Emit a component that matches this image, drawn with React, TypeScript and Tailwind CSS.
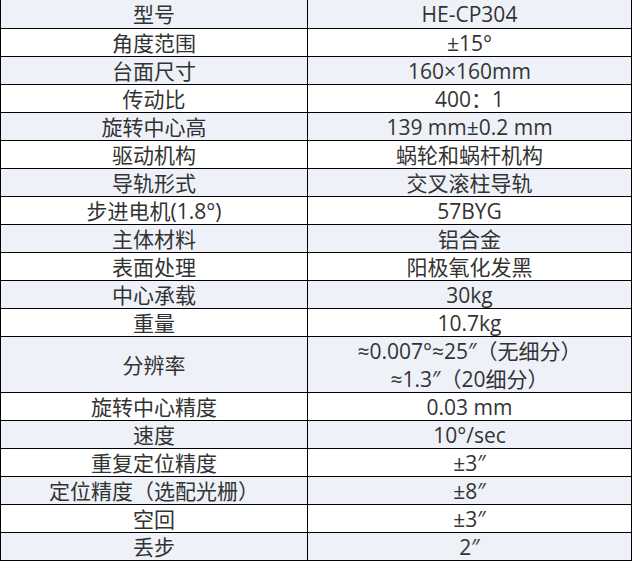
import React from "react";

const rows: { label: string; value: string[] }[] = [
  { label: "型号", value: ["HE-CP304"] },
  { label: "角度范围", value: ["±15°"] },
  { label: "台面尺寸", value: ["160×160mm"] },
  { label: "传动比", value: ["400：1"] },
  { label: "旋转中心高", value: ["139 mm±0.2 mm"] },
  { label: "驱动机构", value: ["蜗轮和蜗杆机构"] },
  { label: "导轨形式", value: ["交叉滚柱导轨"] },
  { label: "步进电机(1.8°)", value: ["57BYG"] },
  { label: "主体材料", value: ["铝合金"] },
  { label: "表面处理", value: ["阳极氧化发黑"] },
  { label: "中心承载", value: ["30kg"] },
  { label: "重量", value: ["10.7kg"] },
  { label: "分辨率", value: ["≈0.007°≈25″（无细分）", "≈1.3″（20细分）"] },
  { label: "旋转中心精度", value: ["0.03 mm"] },
  { label: "速度", value: ["10°/sec"] },
  { label: "重复定位精度", value: ["±3″"] },
  { label: "定位精度（选配光栅）", value: ["±8″"] },
  { label: "空回", value: ["±3″"] },
  { label: "丢步", value: ["2″"] },
];

export default function App() {
  return (
    <div
      className="w-[633px] h-[561px] overflow-hidden bg-white text-[21px] leading-[28px] text-[#333]"
      style={{ fontFamily: '"Open Sans", "Noto Sans CJK SC", sans-serif' }}
    >
      <div className="w-[632px] border-l border-r border-black">
        {rows.map((row, i) => {
          const shaded = i % 2 === 0;
          const double = row.value.length > 1;
          const h = i === 0 ? "h-[29px]" : double ? "h-[56px]" : "h-[28px]";
          return (
            <div
              key={row.label}
              className={`flex border-b border-black ${h} ${shaded ? "bg-[#eef2f8]" : "bg-white"}`}
            >
              <div className="w-[307px] shrink-0 border-r border-black flex items-center justify-center">
                {row.label}
              </div>
              <div className="flex-1 flex flex-col items-center justify-center">
                {row.value.map((v) => (
                  <div key={v}>{v}</div>
                ))}
              </div>
            </div>
          );
        })}
      </div>
    </div>
  );
}
